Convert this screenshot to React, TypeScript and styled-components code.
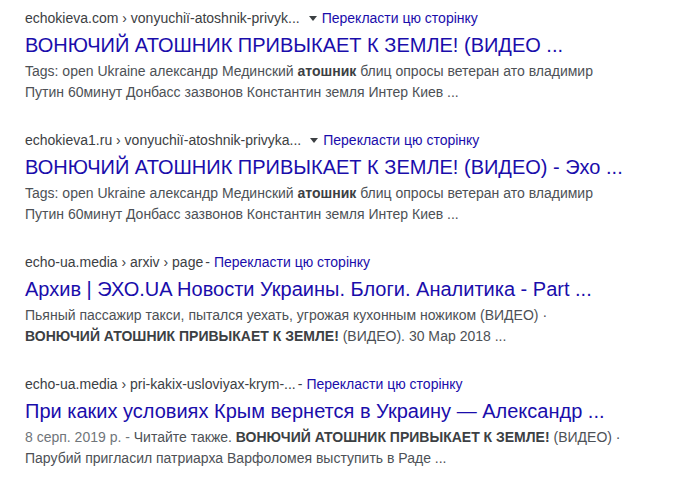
import React from 'react'
import styled, { createGlobalStyle } from 'styled-components';

const GlobalStyle = createGlobalStyle`
  body {
    margin: 0;
    background: #fff;
    font-family: "Liberation Sans", Arial, sans-serif;
  }
`;

const Page = styled.div`
  display: flex;
  flex-direction: column;
  gap: 27px;
  padding: 8px 0 0 25px;
`;

const ResultBlock = styled.div`
  display: flex;
  flex-direction: column;
`;

const UrlLine = styled.div`
  display: flex;
  align-items: center;
  height: 20px;
  font-size: 14px;
  line-height: 20px;
  white-space: nowrap;
`;

const Cite = styled.span`
  color: #3c4043;
`;

const Caret = styled.span`
  width: 0;
  height: 0;
  margin: 1px 5px 0 9px;
  border-top: 5px solid #3c4043;
  border-left: 4px solid transparent;
  border-right: 4px solid transparent;
`;

const Dash = styled.span`
  color: #3c4043;
  margin: 0 4px 0 2px;
`;

const Translate = styled.a`
  color: #1a0dab;
  text-decoration: none;
`;

const Title = styled.a`
  display: block;
  margin-top: 4px;
  font-size: 20px;
  line-height: 26px;
  color: #1a0dab;
  text-decoration: none;
  white-space: nowrap;
`;

const Snippet = styled.div`
  margin-top: 3px;
  font-size: 14px;
  line-height: 21px;
  color: #4d5156;
  white-space: nowrap;

  b {
    color: #3c4043;
  }
`;

const DateText = styled.span`
  color: #70757a;
`;

type Result = {
  url: string;
  dropdown: boolean;
  title: string;
  lines: React.ReactNode[];
};

const results: Result[] = [
  {
    url: 'echokieva.com › vonyuchiї-atoshnik-privyk...',
    dropdown: true,
    title: 'ВОНЮЧИЙ АТОШНИК ПРИВЫКАЕТ К ЗЕМЛЕ! (ВИДЕО ...',
    lines: [
      <>Tags: open Ukraine александр Мединский <b>атошник</b> блиц опросы ветеран ато владимир</>,
      <>Путин 60минут Донбасс зазвонов Константин земля Интер Киев ...</>,
    ],
  },
  {
    url: 'echokieva1.ru › vonyuchiї-atoshnik-privyka...',
    dropdown: true,
    title: 'ВОНЮЧИЙ АТОШНИК ПРИВЫКАЕТ К ЗЕМЛЕ! (ВИДЕО) - Эхо ...',
    lines: [
      <>Tags: open Ukraine александр Мединский <b>атошник</b> блиц опросы ветеран ато владимир</>,
      <>Путин 60минут Донбасс зазвонов Константин земля Интер Киев ...</>,
    ],
  },
  {
    url: 'echo-ua.media › arxiv › page',
    dropdown: false,
    title: 'Архив | ЭХО.UA Новости Украины. Блоги. Аналитика - Part ...',
    lines: [
      <>Пьяный пассажир такси, пытался уехать, угрожая кухонным ножиком (ВИДЕО) ·</>,
      <><b>ВОНЮЧИЙ АТОШНИК ПРИВЫКАЕТ К ЗЕМЛЕ!</b> (ВИДЕО). 30 Мар 2018 ...</>,
    ],
  },
  {
    url: 'echo-ua.media › pri-kakix-usloviyax-krym-...',
    dropdown: false,
    title: 'При каких условиях Крым вернется в Украину — Александр ...',
    lines: [
      <><DateText>8 серп. 2019 р. - </DateText>Читайте также. <b>ВОНЮЧИЙ АТОШНИК ПРИВЫКАЕТ К ЗЕМЛЕ!</b> (ВИДЕО) ·</>,
      <>Парубий пригласил патриарха Варфоломея выступить в Раде ...</>,
    ],
  },
];

export default function App(): JSX.Element {
  return <>
    <GlobalStyle />
    <Page>
      {results.map((r, i) => (
        <ResultBlock key={i}>
          <UrlLine>
            <Cite>{r.url}</Cite>
            {r.dropdown ? <Caret /> : <Dash>-</Dash>}
            <Translate href="#">Перекласти цю сторінку</Translate>
          </UrlLine>
          <Title href="#">{r.title}</Title>
          <Snippet>
            {r.lines.map((l, j) => <div key={j}>{l}</div>)}
          </Snippet>
        </ResultBlock>
      ))}
    </Page>
  </>;
}
